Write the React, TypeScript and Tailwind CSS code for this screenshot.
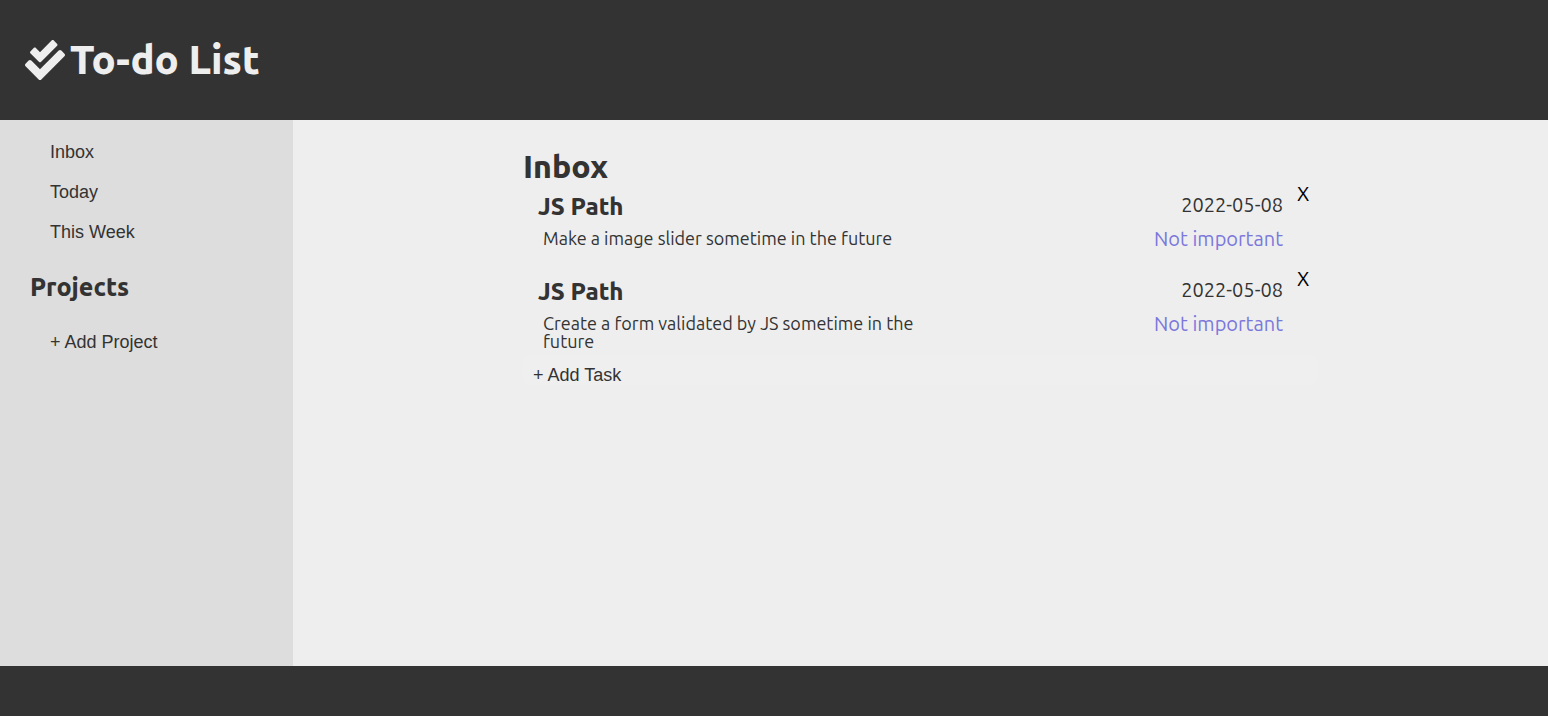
import React from "react";

type Task = { id: number; title: string; details: string; date: string; priority: string };

const tasks: Task[] = [
  { id: 1, title: "JS Path", details: "Make a image slider sometime in the future", date: "2022-05-08", priority: "Not important" },
  { id: 2, title: "JS Path", details: "Create a form validated by JS sometime in the future", date: "2022-05-08", priority: "Not important" },
];

const filters = ["Inbox", "Today", "This Week"];

function CheckIcon() {
  return (
    <svg viewBox="0 0 512 512" className="size-10 shrink-0" fill="currentColor" aria-hidden="true">
      <path d="M505 174.8l-39.6-39.6c-9.4-9.4-24.6-9.4-33.9 0L192 374.7 80.6 263.2c-9.4-9.4-24.6-9.4-33.9 0L7 302.9c-9.4 9.4-9.4 24.6 0 34L175 505c9.4 9.4 24.6 9.4 33.9 0l296-296.2c9.4-9.5 9.4-24.7.1-34zm-324.3 106c6.2 6.3 16.4 6.3 22.6 0l208-208.2c6.2-6.3 6.2-16.4 0-22.6L366.1 4.7c-6.2-6.3-16.4-6.3-22.6 0L192 156.2l-55.4-55.5c-6.2-6.3-16.4-6.3-22.6 0L68.7 146c-6.2 6.3-6.2 16.4 0 22.6l112 112.2z" />
    </svg>
  );
}

function NavButton({ children }: { children: React.ReactNode }) {
  return (
    <button type="button" className="block h-10 w-full px-5 text-left font-['Liberation_Sans',sans-serif] text-lg leading-5">
      {children}
    </button>
  );
}

function TaskRow({ task }: { task: Task }) {
  return (
    <li className="flex min-h-[85px] items-start pl-[15px]">
      <div className="w-[390px] pt-[11px]">
        <h3 className="text-2xl leading-6 font-extrabold">{task.title}</h3>
        <p className="mt-[10px] pl-[5px] text-lg leading-[18px]">{task.details}</p>
      </div>
      <div className="ml-auto pt-[11px] text-right text-xl leading-5">
        <p>{task.date}</p>
        <p className="mt-[14px] text-[#7b78dc]">{task.priority}</p>
      </div>
      <button type="button" aria-label={"Delete " + task.title} className="ml-[14px] w-[21px] text-left text-xl leading-5 text-black">
        X
      </button>
    </li>
  );
}

export default function App() {
  return (
    <div className="flex min-h-screen flex-col bg-[#eeeeee] font-[Ubuntu,'Noto_Sans',sans-serif] text-[#333333]">
      <header className="flex h-[120px] items-center gap-[5px] bg-[#333333] px-[25px] text-[#eeeeee]">
        <CheckIcon />
        <h1 className="text-[40px] leading-10 font-extrabold">To-do List</h1>
      </header>
      <div className="flex flex-1">
        <nav className="w-[293px] bg-[#dddddd] px-[30px] pt-3">
          {filters.map((name) => (
            <NavButton key={name}>{name}</NavButton>
          ))}
          <h2 className="my-[22px] text-[25px] leading-[26px] font-extrabold">Projects</h2>
          <NavButton>+ Add Project</NavButton>
        </nav>
        <main className="flex-1 pt-[30px]">
          <div className="mx-auto w-full max-w-[795px]">
            <h2 className="text-[32px] leading-8 font-extrabold">Inbox</h2>
            <ul className="pt-[2px]">
              {tasks.map((task) => (
                <TaskRow key={task.id} task={task} />
              ))}
            </ul>
            <button type="button" className="mt-[1px] block w-full rounded-lg bg-[#efefef] px-[10px] pt-[10px] text-left font-['Liberation_Sans',sans-serif] text-lg leading-5">
              + Add Task
            </button>
          </div>
        </main>
      </div>
      <footer className="h-[50px] bg-[#333333]" />
    </div>
  );
}
